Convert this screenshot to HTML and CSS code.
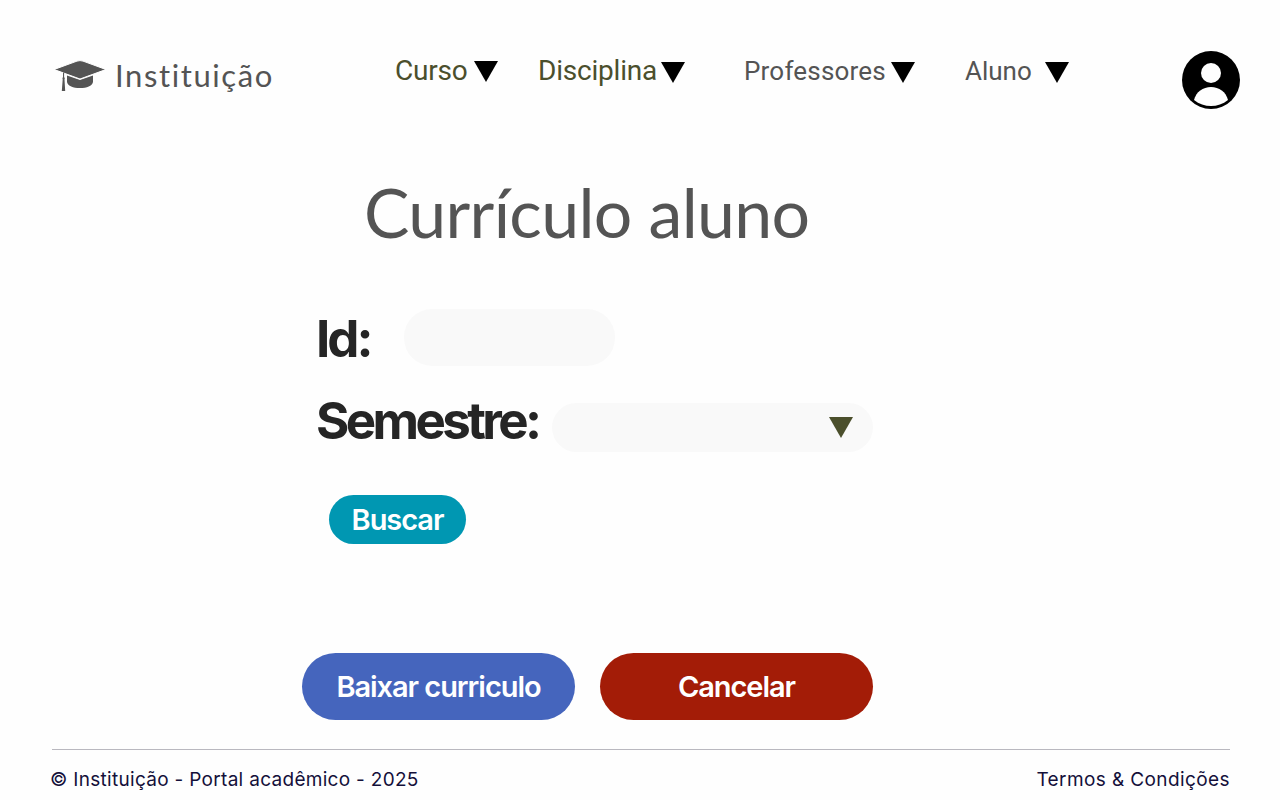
FILE: index.html
```html
<!DOCTYPE html>
<html lang="pt-BR">
<head>
<meta charset="utf-8">
<title>Currículo aluno</title>
<link rel="stylesheet" href="styles.css">
</head>
<body>
<header class="header">
  <a class="brand">
    <svg class="cap" width="50" height="32" viewBox="0 0 50 32"><path d="M12 15.500 25 20 38 15.500V22C37 26 32 28 25 28S13 26 12 22Z"/><path class="board" d="M-1 9.500 22 1.100Q25 .100 28 1.100L51 9.500 25 19Z"/><path d="M8 12.500H9.100V17Q10.300 18 9.500 19.500L10.200 31H6.800L7.700 19.500Q7 18 8 17Z"/></svg>
    <span class="brand-name">Instituição</span>
  </a>
  <nav class="nav">
    <a class="item olive curso"><span>Curso</span><svg class="arrow" width="24" height="21" viewBox="0 0 24 21"><path d="M0 0H24L12 21Z"/></svg></a>
    <a class="item olive disciplina"><span>Disciplina</span><svg class="arrow" width="24" height="21" viewBox="0 0 24 21"><path d="M0 0H24L12 21Z"/></svg></a>
    <a class="item professores"><span>Professores</span><svg class="arrow" width="24" height="21" viewBox="0 0 24 21"><path d="M0 0H24L12 21Z"/></svg></a>
    <a class="item aluno"><span>Aluno</span><svg class="arrow" width="24" height="21" viewBox="0 0 24 21"><path d="M0 0H24L12 21Z"/></svg></a>
  </nav>
  <svg class="avatar" width="58" height="58" viewBox="0 0 58 58"><circle cx="29" cy="29" r="29"/><circle class="light" cx="29" cy="22" r="10"/><path class="light" d="M12 49C14 41 21 36 29 36S44 41 46 49C41 53 35 55 29 55S17 53 12 49Z"/></svg>
</header>
<main class="main">
  <h1 class="title">Currículo aluno</h1>
  <form class="form">
    <div class="row row-id"><label class="label label-id">Id:</label><div class="field field-id"></div></div>
    <div class="row row-semester"><label class="label label-semester">Semestre:</label><div class="field field-semester"><svg width="24" height="21" viewBox="0 0 24 21"><path d="M0 0H24L12 21Z"/></svg></div></div>
    <button class="button search" type="button"><span>Buscar</span></button>
    <div class="actions"><button class="button download" type="button"><span>Baixar curriculo</span></button><button class="button cancel" type="button"><span>Cancelar</span></button></div>
  </form>
</main>
<footer class="footer"><span class="copy">© Instituição - Portal acadêmico - 2025</span><a class="terms">Termos &amp; Condições</a></footer>
</body>
</html>
```

FILE: styles.css
```css
* { box-sizing: border-box; }
body { margin: 0; width: 1280px; height: 800px; overflow: hidden; background: #fefefe; display: flex; flex-direction: column; }
svg { display: block; flex: none; }
span, label { white-space: nowrap; }
.header { height: 160px; padding: 51px 40px 0 55px; display: flex; align-items: flex-start; }
.brand { display: flex; width: 340px; padding-top: 9px; color: #545454; font-family: Lato, sans-serif; }
.cap { fill: #545454; }
.board { stroke: #fefefe; stroke-width: 1; }
.brand-name { margin: -4px 0 0 10px; font-size: 31px; line-height: 38px; letter-spacing: 1.600px; }
.nav { display: flex; flex: 1; font-family: Roboto, sans-serif; color: #545454; }
.item { display: flex; justify-content: space-between; font-size: 26px; line-height: 40px; }
.olive { color: #4b4f2c; font-size: 28px; letter-spacing: -0.200px; }
.arrow { margin-top: 11px; fill: #000; }
.curso { width: 103px; margin-right: 40px; }
.curso .arrow { margin-top: 10px; }
.disciplina { width: 147px; margin-right: 59px; }
.professores { width: 171px; margin-right: 50px; letter-spacing: 0.200px; }
.aluno { width: 104px; }
.avatar { fill: #000; }
.light { fill: #fefefe; }
.main { height: 588px; padding: 0 0 0 302px; }
.title { margin: 12px 0 0 62px; height: 80px; font: 400 68px/80px Lato, sans-serif; letter-spacing: -0.650px; color: #545454; white-space: nowrap; }
.form { padding-top: 57px; }
.row { display: flex; padding-left: 14px; }
.label { font: 700 51px/58px Inter, sans-serif; letter-spacing: -3.600px; color: #252525; }
.label-id { width: 88px; padding-top: 1px; letter-spacing: -3px; }
.field { background: #f9f9f9; }
.field-id { width: 211px; height: 57px; border-radius: 28px; }
.row-semester { height: 49px; margin-top: 37px; }
.label-semester { width: 236px; margin-top: -11px; }
.field-semester { width: 321px; height: 49px; border-radius: 24.500px; padding: 14px 20px; display: flex; justify-content: flex-end; fill: #4b4f2c; }
.row-id { height: 57px; }
.button { border: 0; padding: 0; display: flex; align-items: center; justify-content: center; color: #fff; font: 600 29px/36px Inter, sans-serif; letter-spacing: -1.050px; }
.search { width: 137px; height: 49px; border-radius: 24.500px; margin: 43px 0 0 27px; background: #0097b2; }
.actions { display: flex; gap: 25px; margin-top: 109px; }
.download, .cancel { width: 273px; height: 67px; border-radius: 33.500px; }
.download { background: #4565bd; }
.cancel { background: #a31c07; }
.footer { width: 1178px; margin: 1px 0 0 52px; border-top: 1px solid #b9b8bf; display: flex; justify-content: space-between; padding-top: 14px; font: 400 19px/32px Inter, sans-serif; color: #14103a; }
.copy { margin-left: -2px; letter-spacing: 0.300px; }
.terms { letter-spacing: 0.400px; }
```
